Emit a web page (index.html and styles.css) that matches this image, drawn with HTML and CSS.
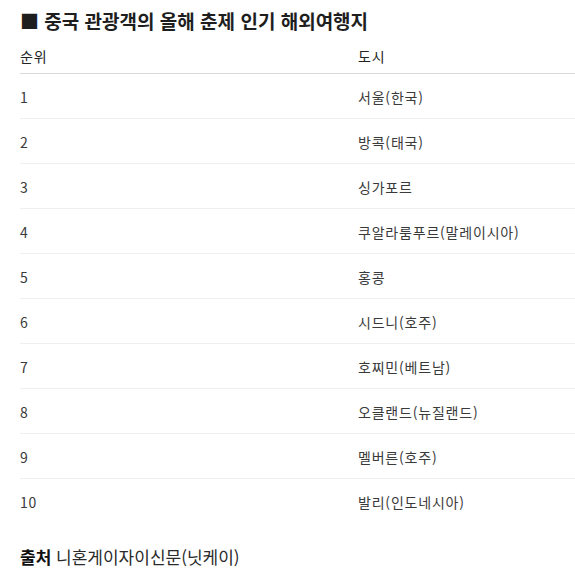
FILE: index.html
```html
<!DOCTYPE html>
<html lang="ko">
<head>
<meta charset="utf-8">
<link rel="stylesheet" href="styles.css">
</head>
<body>
<div class="page">
  <h2 class="title">■ 중국 관광객의 올해 춘제 인기 해외여행지</h2>
  <table class="rank">
    <thead>
      <tr><th class="c1">순위</th><th>도시</th></tr>
    </thead>
    <tbody>
      <tr><td>1</td><td>서울(한국)</td></tr>
      <tr><td>2</td><td>방콕(태국)</td></tr>
      <tr><td>3</td><td>싱가포르</td></tr>
      <tr><td>4</td><td>쿠알라룸푸르(말레이시아)</td></tr>
      <tr><td>5</td><td>홍콩</td></tr>
      <tr><td>6</td><td>시드니(호주)</td></tr>
      <tr><td>7</td><td>호찌민(베트남)</td></tr>
      <tr><td>8</td><td>오클랜드(뉴질랜드)</td></tr>
      <tr><td>9</td><td>멜버른(호주)</td></tr>
      <tr><td>10</td><td>발리(인도네시아)</td></tr>
    </tbody>
  </table>
  <p class="source"><strong>출처</strong> 니혼게이자이신문(닛케이)</p>
</div>
</body>
</html>
```

FILE: styles.css
```css
html, body {
  margin: 0;
  padding: 0;
  background: #fff;
}
body {
  font-family: "Noto Sans CJK KR", "Noto Sans", sans-serif;
  color: #333;
}
.page {
  padding: 8px 0 0 20px;
}
.title {
  margin: 0;
  font-size: 19px;
  line-height: 26px;
  font-weight: 700;
  color: #1e1e1e;
}
.rank {
  width: 555px;
  border-collapse: collapse;
  margin-top: 11px;
}
.rank th {
  text-align: left;
  font-weight: 400;
  font-size: 14px;
  letter-spacing: 0.8px;
  line-height: 18px;
  color: #222;
  padding: 2px 0 8px 0;
  border-bottom: 1px solid #d9d9d9;
}
.rank th.c1 {
  width: 338px;
}
.rank td {
  font-size: 14px;
  letter-spacing: 0.8px;
  line-height: 18px;
  color: #3a3a3a;
  padding: 14px 0 12px 0;
  border-bottom: 1px solid #efefef;
}
.rank tbody tr:last-child td {
  border-bottom: none;
}
.source {
  margin: 22px 0 0 0;
  font-size: 17px;
  line-height: 24px;
  color: #2a2a2a;
}
.source strong {
  font-weight: 700;
  color: #111;
}
```
